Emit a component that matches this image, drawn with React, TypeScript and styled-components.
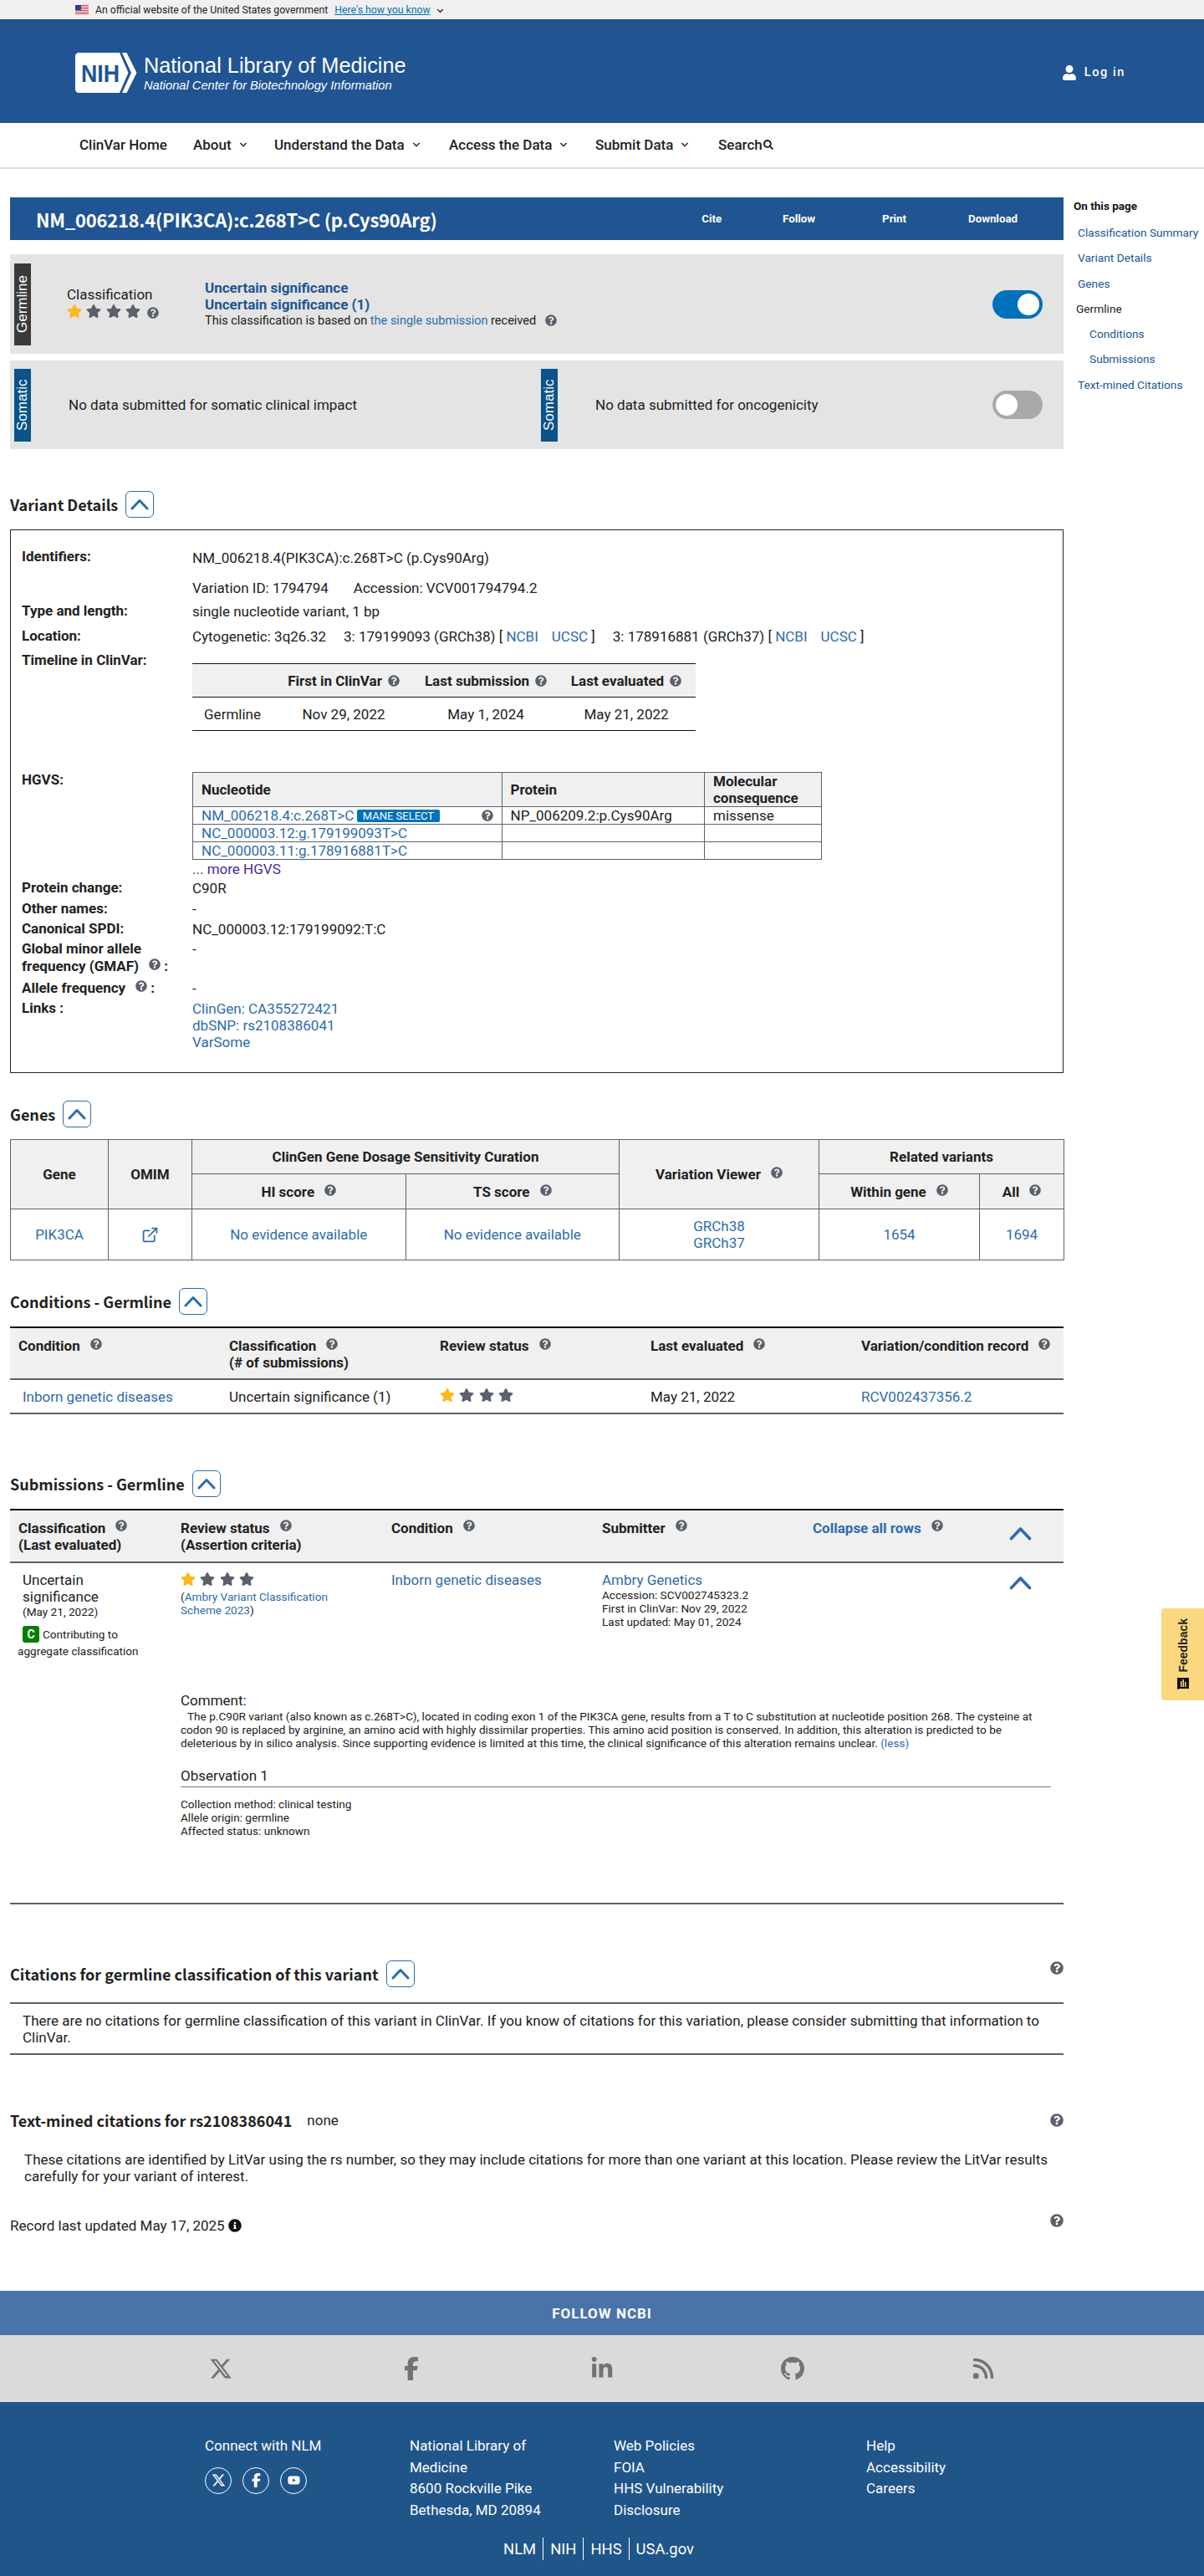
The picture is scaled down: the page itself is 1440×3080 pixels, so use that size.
import React from 'react';
import styled, { createGlobalStyle } from 'styled-components';
import { FaStar, FaQuestionCircle, FaSearch, FaUser, FaInfoCircle } from 'react-icons/fa';
import { FaXTwitter, FaFacebookF, FaLinkedinIn, FaRss, FaYoutube } from 'react-icons/fa6';
import { BsGithub } from 'react-icons/bs';
import { ExternalLink } from 'lucide-react';

const BLUE = '#205493';
const LINK = '#2e6cab';
const GREY = '#5b616b';
const SOURCE = '"Noto Sans CJK SC", "Source Sans Pro", "Open Sans", sans-serif';

const Global = createGlobalStyle`
  html, body { margin: 0; padding: 0; background: #fff; }
  body { font-family: Roboto, "Liberation Sans", sans-serif; font-size: 17px; line-height: 20px; color: #212121; }
  * { box-sizing: border-box; }
  a { color: ${LINK}; text-decoration: none; }
`;

const Root = styled.div`position: relative; width: 1440px; height: 3080px; overflow: hidden;`;

/* top */
const Banner = styled.div`height: 23px; background: #f0f0f0; display: flex; align-items: center; padding-left: 90px; font-size: 12.25px; color: #212121;`;
const BannerLink = styled.a`color: #0071bc; text-decoration: underline; margin-left: 8px;`;
const Header = styled.header`height: 124px; background: ${BLUE}; display: flex; align-items: center; justify-content: space-between; padding: 3px 94px 0 90px;`;
const LogoWrap = styled.div`display: flex; align-items: center; gap: 8px;`;
const LogoText = styled.div`color: #fff; font-family: "Liberation Sans", Arial, sans-serif;`;
const LogoTitle = styled.div`font-size: 25.3px; line-height: 30px;`;
const LogoSub = styled.div`font-size: 14.66px; line-height: 18px; font-style: italic;`;
const Login = styled.div`display: flex; align-items: center; gap: 9px; color: #fff; font-size: 14.5px; font-weight: 500; letter-spacing: 1.6px;`;
const Nav = styled.nav`height: 55px; border-bottom: 2px solid #dcdcdc; display: flex; align-items: center; padding: 0 0 2px 95px; font-size: 17px; font-weight: 500; color: #212121;`;
const NavItem = styled.div<{ $w: number; $gap?: number }>`width: ${p => p.$w}px; display: flex; align-items: center; gap: ${p => p.$gap ?? 9}px; white-space: nowrap;`;

/* layout */
const Main = styled.div`display: flex; padding: 34px 0 0 12px;`;
const Content = styled.main`width: 1260px; flex: none;`;
const Aside = styled.aside`margin-left: 12px; font-size: 13.7px;`;
const AsideTitle = styled.div`font-size: 13.5px; font-weight: 700; color: #111; line-height: 20px; margin-bottom: 12px;`;
const AsideItem = styled.a<{ $indent?: number; $plain?: boolean }>`display: block; height: 30.3px; line-height: 20px; padding-left: ${p => p.$indent ?? 5}px; color: ${p => (p.$plain ? '#212121' : BLUE)}; white-space: nowrap;`;

const TitleBar = styled.div`height: 51px; background: ${BLUE}; color: #fff; display: flex; align-items: center; padding: 0 55px 0 31px;`;
const Title = styled.h1`margin: 0; font: 700 22px/34px ${SOURCE}; letter-spacing: -0.25px; white-space: nowrap;`;
const Actions = styled.div`margin-left: auto; display: flex; font-size: 13.3px; font-weight: 700;`;
const Action = styled.span<{ $ml: number }>`margin-left: ${p => p.$ml}px;`;

const GermPanel = styled.section`margin-top: 17px; height: 119px; background: #e4e4e4; display: flex; align-items: center; padding-left: 5px;`;
const SomaticPanel = styled.section`margin-top: 8px; height: 106px; background: #e4e4e4; display: grid; grid-template-columns: 630px 1fr; padding-left: 5px; align-items: center;`;
const SideLabel = styled.div<{ $bg: string; $h: number }>`width: 20px; height: ${p => p.$h}px; background: ${p => p.$bg}; color: #fff; writing-mode: vertical-rl; transform: rotate(180deg); font: 17px/20px "Liberation Sans", Arial, sans-serif; text-align: center; flex: none;`;
const ClassBlock = styled.div`margin-left: 43px; width: 165px; flex: none;`;
const ClassLabel = styled.div`line-height: 20px; margin-bottom: 1px;`;
const Stars = styled.span`display: inline-flex; align-items: center; gap: 5.4px;`;
const HelpGap = styled.span<{ $l?: number; $t?: number }>`display: inline-block; margin-left: ${p => p.$l ?? 8}px; position: relative; top: ${p => p.$t ?? 1}px; line-height: 0; vertical-align: baseline;`;
const ClassResult = styled.div`font-size: 14.5px; line-height: 20px;`;
const ResultStrong = styled.div`color: ${BLUE}; font-size: 17px; font-weight: 700; line-height: 20px;`;
const SomaticHalf = styled.div`display: flex; align-items: center; position: relative;`;
const SomaticText = styled.div`margin-left: 45px;`;
const Toggle = styled.div<{ $on?: boolean }>`width: 60px; height: 34px; border-radius: 34px; background: ${p => (p.$on ? '#0071bc' : '#a9a9a9')}; position: relative; flex: none; margin-left: auto; margin-right: 25px; &::after { content: ''; position: absolute; width: 26px; height: 26px; border-radius: 50%; background: #fff; top: 4px; left: ${p => (p.$on ? '30px' : '4px')}; }`;

/* section heading */
const HeadingRow = styled.div<{ $top: number; $bottom?: number }>`margin-top: ${p => p.$top}px; margin-bottom: ${p => p.$bottom ?? 14}px; height: 32px; display: flex; align-items: center;`;
const Heading = styled.h2`margin: 0; font: 700 18px/28px ${SOURCE}; color: #212121; white-space: nowrap;`;
const Collapse = styled.button`margin-left: 9px; width: 34px; height: 32px; padding: 0; border: 1px solid ${LINK}; border-radius: 6px; background: #fff; display: flex; align-items: center; justify-content: center;`;
const RightHelp = styled.span<{ $t?: number }>`margin-left: auto; align-self: flex-start; margin-top: ${p => p.$t ?? 0}px; line-height: 0;`;
const CenterHelp = styled.span`margin-left: auto; line-height: 0;`;

/* variant details */
const DetailBox = styled.div`margin-top: 14px; height: 650px; border: 1px solid #222; padding: 22px 0 0 13px;`;
const Row = styled.div<{ $h: number }>`display: grid; grid-template-columns: 204px 1fr; height: ${p => p.$h}px;`;
const Label = styled.div<{ $lh?: number }>`font-weight: 700; line-height: ${p => p.$lh ?? 20}px; margin-top: -1px;`;
const Value = styled.div<{ $top?: number }>`line-height: 20px; white-space: nowrap; padding-top: ${p => p.$top ?? 0}px;`;
const Spaced = styled.span<{ $ml: number }>`margin-left: ${p => p.$ml}px;`;
const TimeTable = styled.table`margin-top: 13px; width: 602px; border-collapse: collapse; table-layout: fixed; border-top: 1px solid #111; border-bottom: 1px solid #111; text-align: center;`;
const TimeHeadCell = styled.th`height: 40px; padding: 0; background: #f0f0f0; font-weight: 700; border-bottom: 1px solid #111; white-space: nowrap;`;
const TimeCell = styled.td`height: 40px; padding: 0;`;
const HgvsTable = styled.table`width: 752px; border-collapse: collapse; table-layout: fixed; border: 1px solid ${GREY};`;
const HgvsHead = styled.th`height: 41px; padding: 0 10px; background: #f0f0f0; text-align: left; font-weight: 700; line-height: 20px; border: 1px solid ${GREY}; white-space: normal;`;
const HgvsCell = styled.td`height: 21px; padding: 0 10px; line-height: 20px; border: 1px solid ${GREY}; white-space: nowrap;`;
const CellFlex = styled.div`display: flex; align-items: center;`;
const Mane = styled.span`margin-left: 4px; background: #0071bc; color: #fff; font-size: 13px; line-height: 15px; height: 15px; padding: 0 6.5px; border-radius: 2px; white-space: nowrap;`;
const MoreLink = styled.a`color: #4b2a9a; display: block; line-height: 22px;`;
const StackLink = styled.a`display: block;`;

/* tables */
const GeneTable = styled.table`width: 1260px; border-collapse: collapse; table-layout: fixed; text-align: center; border: 1px solid ${GREY};`;
const GeneHead = styled.th<{ $h?: number }>`padding: 0; height: ${p => p.$h ?? 41}px; background: #f0f0f0; font-weight: 700; border: 1px solid ${GREY};`;
const GeneCell = styled.td`height: 61px; padding: 0; border: 1px solid ${GREY}; line-height: 20px;`;
const IconLink = styled.a`display: inline-flex; vertical-align: middle;`;
const CondGrid = styled.div`display: grid; grid-template-columns: repeat(5, 252px);`;
const CondHead = styled(CondGrid)`height: 64px; background: #f0f0f0; border-top: 2px solid #111; border-bottom: 2px solid ${GREY}; font-weight: 700; padding-top: 11px;`;
const CondBody = styled(CondGrid)`height: 41px; border-bottom: 2px solid ${GREY}; align-items: center;`;
const CondCell = styled.div<{ $pad: number }>`padding-left: ${p => p.$pad}px;`;
const SubHead = styled.div`height: 65px; background: #f0f0f0; border-top: 2px solid #111; border-bottom: 2px solid ${GREY}; display: grid; grid-template-columns: 204px 252px 252px 252px 1fr; font-weight: 700; padding-top: 11px;`;
const SubCell = styled.div<{ $pad?: number }>`padding-left: ${p => p.$pad ?? 0}px; position: relative;`;
const SubBody = styled.div`height: 143px; display: grid; grid-template-columns: 204px 252px 252px 252px 1fr; padding-top: 10px;`;
const Small = styled.div<{ $lh?: number }>`font-size: 13.6px; line-height: ${p => p.$lh ?? 16}px;`;
const SigCell = styled.div`padding-left: 15px; line-height: 20px;`;
const Badge = styled.span`display: inline-block; width: 20px; height: 20px; background: #008000; color: #fff; border-radius: 3px; font-size: 14px; line-height: 20px; font-weight: 700; text-align: center; margin-right: 4px;`;
const Contrib = styled.div`font-size: 13.6px; line-height: 20px; margin: 8px 0 0 -6px; width: 170px;`;
const ContribTop = styled.div`display: flex; align-items: center; margin-left: 6px;`;
const ChevronSpot = styled.span<{ $t: number }>`position: absolute; left: 235px; top: ${p => p.$t}px; line-height: 0;`;
const CommentBlock = styled.div`margin-left: 204px; margin-top: 11px; width: 1041px;`;
const CommentTitle = styled.div`line-height: 20px;`;
const CommentText = styled.div`font-size: 13.6px; line-height: 16px; margin-top: 1px; text-indent: 8px; width: 1030px;`;
const ObsTitle = styled.div`margin-top: 21px; line-height: 20px; border-bottom: 1px solid #777; height: 24px;`;
const ObsList = styled.div`font-size: 13.6px; line-height: 16px; margin-top: 12px;`;
const Rule = styled.div<{ $top: number }>`margin-top: ${p => p.$top}px; height: 2px; background: ${GREY};`;
const Para = styled.div<{ $h: number; $pad: number; $top: number; $rule?: boolean }>`height: ${p => p.$h}px; padding: ${p => p.$top}px 0 0 ${p => p.$pad}px; line-height: 20px; ${p => p.$rule && `border-bottom: 2px solid ${GREY};`}`;
const NoneNote = styled.span`margin-left: 18px;`;
const RecordRow = styled.div`margin-top: 39px; display: flex; align-items: center; height: 20px; position: relative;`;
const RecordIcon = styled.span`margin-left: 4px; line-height: 0; color: #111;`;

/* feedback */
const Feedback = styled.div`position: absolute; left: 1389px; top: 1923px; width: 51px; height: 110px; background: #fbd77f; border-radius: 4px 0 0 4px; display: flex; flex-direction: column-reverse; align-items: center; justify-content: center; gap: 6px; font: 700 14px/16px "Liberation Sans", Arial, sans-serif; color: #222;`;
const FeedbackText = styled.span`writing-mode: vertical-rl; transform: rotate(180deg);`;

/* footer */
const Footer = styled.footer`margin-top: 68px;`;
const FollowBar = styled.div`height: 53px; background: #4a73aa; color: #fff; display: flex; align-items: center; justify-content: center; font: 700 17px/20px Roboto, sans-serif; letter-spacing: 1px;`;
const SocialBar = styled.div`height: 80px; background: #dadada; display: flex; align-items: center; justify-content: center; gap: 200px; color: #737373;`;
const FootMain = styled.div`height: 208px; background: #20558a; color: #fff; padding-top: 40px; line-height: 25.6px;`;
const FootGrid = styled.div`display: grid; grid-template-columns: 245px 244px 302px 1fr; padding-left: 245px;`;
const Circles = styled.div`display: flex; gap: 13px; margin-top: 12px;`;
const Circle = styled.span`width: 32px; height: 32px; border: 1px solid #fff; border-radius: 50%; display: flex; align-items: center; justify-content: center; background: #20558a;`;
const FootLinks = styled.div`display: flex; justify-content: center; margin-top: 20px; margin-left: -8px; font-size: 18.4px;`;
const FootLink = styled.span`height: 27px; line-height: 27px; padding: 0 8px; & + & { border-left: 1px solid #fff; }`;

const Help = ({ s = 14 }: { s?: number }) => <FaQuestionCircle size={s} color={GREY} />;
const H = ({ l, t, s }: { l?: number; t?: number; s?: number }) => <HelpGap $l={l} $t={t}><Help s={s} /></HelpGap>;
const Chev = ({ w = 12, h = 7, sw = 1.6, c = '#212121' }: { w?: number; h?: number; sw?: number; c?: string }) => (
  <svg width={w} height={h} viewBox="0 0 12 7" fill="none" stroke={c} strokeWidth={sw} strokeLinecap="round" strokeLinejoin="round"><path d="M2 1.5 6 5.5 10 1.5" /></svg>
);
const Up = ({ w = 22, h = 14, sw = 3 }: { w?: number; h?: number; sw?: number }) => (
  <svg width={w} height={h} viewBox="0 0 22 14" fill="none" stroke={LINK} strokeWidth={sw} strokeLinecap="round" strokeLinejoin="round"><path d="M2 12 11 2.5 20 12" /></svg>
);
const StarRow = ({ s = 18 }: { s?: number }) => (
  <Stars>
    <FaStar size={s} color="#fdb81e" /><FaStar size={s} color={GREY} /><FaStar size={s} color={GREY} /><FaStar size={s} color={GREY} />
  </Stars>
);
const Flag = () => (
  <svg width="16" height="11" viewBox="0 0 16 11">
    <rect width="16" height="11" fill="#fff" />
    {[0, 2, 4, 6, 8, 10].map(y => <rect key={y} y={y} width="16" height="1" fill="#c8313e" />)}
    <rect width="7" height="6" fill="#2a3f8f" />
  </svg>
);
const NihLogo = () => (
  <svg width="74" height="48" viewBox="0 0 74 48">
    <path d="M4 0H53L63.5 24 53 48H4C1.8 48 0 46.2 0 44V4C0 1.8 1.8 0 4 0Z" fill="#fff" />
    <path d="M56 0H61.5L73.5 24 61.5 48H56L67 24Z" fill="#fff" />
    <text x="7" y="35" fontFamily="Liberation Sans, Arial, sans-serif" fontWeight="700" fontSize="30" fill="#205493" textLength="46" lengthAdjust="spacingAndGlyphs">NIH</text>
  </svg>
);
const Search = () => <FaSearch size={12} color="#212121" />;

export default function App() {
  return (
    <Root>
      <Global />
      <Banner>
        <Flag />
        <Spaced $ml={8}>An official website of the United States government</Spaced>
        <BannerLink href="#">Here's how you know</BannerLink>
        <Spaced $ml={7}><Chev w={9} h={6} /></Spaced>
      </Banner>
      <Header>
        <LogoWrap>
          <NihLogo />
          <LogoText>
            <LogoTitle>National Library of Medicine</LogoTitle>
            <LogoSub>National Center for Biotechnology Information</LogoSub>
          </LogoText>
        </LogoWrap>
        <Login><FaUser size={18} color="#fff" /><span>Log in</span></Login>
      </Header>
      <Nav>
        <NavItem $w={136}>ClinVar Home</NavItem>
        <NavItem $w={97}>About <Chev w={10} h={6} /></NavItem>
        <NavItem $w={209}>Understand the Data <Chev w={10} h={6} /></NavItem>
        <NavItem $w={175}>Access the Data <Chev w={10} h={6} /></NavItem>
        <NavItem $w={147}>Submit Data <Chev w={10} h={6} /></NavItem>
        <NavItem $w={80} $gap={1}>Search<Search /></NavItem>
      </Nav>
      <Main>
        <Content>
          <TitleBar>
            <Title>NM_006218.4(PIK3CA):c.268T&gt;C (p.Cys90Arg)</Title>
            <Actions>
              <Action $ml={0}>Cite</Action>
              <Action $ml={73}>Follow</Action>
              <Action $ml={80}>Print</Action>
              <Action $ml={74}>Download</Action>
            </Actions>
          </TitleBar>

          <GermPanel>
            <SideLabel $bg="#3a3a3a" $h={98}>Germline</SideLabel>
            <ClassBlock>
              <ClassLabel>Classification</ClassLabel>
              <StarRow /><H l={8} t={0} />
            </ClassBlock>
            <ClassResult>
              <ResultStrong>Uncertain significance</ResultStrong>
              <ResultStrong>Uncertain significance (1)</ResultStrong>
              This classification is based on <a href="#">the single submission</a> received<H l={11} t={2} />
            </ClassResult>
            <Toggle $on />
          </GermPanel>
          <SomaticPanel>
            <SomaticHalf>
              <SideLabel $bg="#0b5388" $h={87}>Somatic</SideLabel>
              <SomaticText>No data submitted for somatic clinical impact</SomaticText>
            </SomaticHalf>
            <SomaticHalf>
              <SideLabel $bg="#0b5388" $h={87}>Somatic</SideLabel>
              <SomaticText>No data submitted for oncogenicity</SomaticText>
              <Toggle />
            </SomaticHalf>
          </SomaticPanel>

          <HeadingRow $top={50} $bottom={0}><Heading>Variant Details</Heading><Collapse><Up /></Collapse></HeadingRow>
          <DetailBox>
            <Row $h={37}><Label>Identifiers:</Label><Value $top={1}>NM_006218.4(PIK3CA):c.268T&gt;C (p.Cys90Arg)</Value></Row>
            <Row $h={28}><Label /><Value>Variation ID: 1794794<Spaced $ml={30}>Accession: VCV001794794.2</Spaced></Value></Row>
            <Row $h={30}><Label>Type and length:</Label><Value>single nucleotide variant, 1 bp</Value></Row>
            <Row $h={29}>
              <Label>Location:</Label>
              <Value>
                Cytogenetic: 3q26.32
                <Spaced $ml={21}>3: 179199093 (GRCh38) [ <a href="#">NCBI</a><Spaced $ml={16}><a href="#">UCSC</a></Spaced> ]</Spaced>
                <Spaced $ml={21}>3: 178916881 (GRCh37) [ <a href="#">NCBI</a><Spaced $ml={16}><a href="#">UCSC</a></Spaced> ]</Spaced>
              </Value>
            </Row>
            <Row $h={143}>
              <Label>Timeline in ClinVar:</Label>
              <Value>
                <TimeTable>
                  <colgroup><col width="96" /><col width="170" /><col width="170" /><col width="166" /></colgroup>
                  <thead>
                    <tr>
                      <TimeHeadCell />
                      <TimeHeadCell>First in ClinVar<H l={7} /></TimeHeadCell>
                      <TimeHeadCell>Last submission<H l={7} /></TimeHeadCell>
                      <TimeHeadCell>Last evaluated<H l={7} /></TimeHeadCell>
                    </tr>
                  </thead>
                  <tbody>
                    <tr><TimeCell>Germline</TimeCell><TimeCell>Nov 29, 2022</TimeCell><TimeCell>May 1, 2024</TimeCell><TimeCell>May 21, 2022</TimeCell></tr>
                  </tbody>
                </TimeTable>
              </Value>
            </Row>
            <Row $h={129}>
              <Label>HGVS:</Label>
              <Value>
                <HgvsTable>
                  <colgroup><col width="369.5" /><col width="242.5" /><col width="140" /></colgroup>
                  <thead>
                    <tr><HgvsHead>Nucleotide</HgvsHead><HgvsHead>Protein</HgvsHead><HgvsHead>Molecular consequence</HgvsHead></tr>
                  </thead>
                  <tbody>
                    <tr>
                      <HgvsCell><CellFlex><a href="#">NM_006218.4:c.268T&gt;C</a><Mane>MANE SELECT</Mane><CenterHelp><Help /></CenterHelp></CellFlex></HgvsCell>
                      <HgvsCell>NP_006209.2:p.Cys90Arg</HgvsCell>
                      <HgvsCell>missense</HgvsCell>
                    </tr>
                    <tr><HgvsCell><a href="#">NC_000003.12:g.179199093T&gt;C</a></HgvsCell><HgvsCell /><HgvsCell /></tr>
                    <tr><HgvsCell><a href="#">NC_000003.11:g.178916881T&gt;C</a></HgvsCell><HgvsCell /><HgvsCell /></tr>
                  </tbody>
                </HgvsTable>
                <MoreLink href="#">... more HGVS</MoreLink>
              </Value>
            </Row>
            <Row $h={25}><Label>Protein change:</Label><Value>C90R</Value></Row>
            <Row $h={24}><Label>Other names:</Label><Value>-</Value></Row>
            <Row $h={24}><Label>Canonical SPDI:</Label><Value>NC_000003.12:179199092:T:C</Value></Row>
            <Row $h={47}><Label $lh={21}>Global minor allele<br />frequency (GMAF)<H l={12} t={-1} /> :</Label><Value>-</Value></Row>
            <Row $h={24}><Label>Allele frequency<H l={12} t={-1} /> :</Label><Value>-</Value></Row>
            <Row $h={60}>
              <Label>Links :</Label>
              <Value>
                <StackLink href="#">ClinGen: CA355272421</StackLink>
                <StackLink href="#">dbSNP: rs2108386041</StackLink>
                <StackLink href="#">VarSome</StackLink>
              </Value>
            </Row>
          </DetailBox>

          <HeadingRow $top={33}><Heading>Genes</Heading><Collapse><Up /></Collapse></HeadingRow>
          <GeneTable>
            <colgroup><col width="117" /><col width="100" /><col width="255.5" /><col width="255.5" /><col width="239" /><col width="192" /><col width="101" /></colgroup>
            <thead>
              <tr>
                <GeneHead rowSpan={2}>Gene</GeneHead>
                <GeneHead rowSpan={2}>OMIM</GeneHead>
                <GeneHead colSpan={2}>ClinGen Gene Dosage Sensitivity Curation</GeneHead>
                <GeneHead rowSpan={2}>Variation Viewer<H l={12} t={-1} /></GeneHead>
                <GeneHead colSpan={2}>Related variants</GeneHead>
              </tr>
              <tr>
                <GeneHead $h={42}>HI score<H l={12} t={-1} /></GeneHead>
                <GeneHead $h={42}>TS score<H l={12} t={-1} /></GeneHead>
                <GeneHead $h={42}>Within gene<H l={12} t={-1} /></GeneHead>
                <GeneHead $h={42}>All<H l={12} t={-1} /></GeneHead>
              </tr>
            </thead>
            <tbody>
              <tr>
                <GeneCell><a href="#">PIK3CA</a></GeneCell>
                <GeneCell><IconLink href="#"><ExternalLink size={21} strokeWidth={2} color={LINK} /></IconLink></GeneCell>
                <GeneCell><a href="#">No evidence available</a></GeneCell>
                <GeneCell><a href="#">No evidence available</a></GeneCell>
                <GeneCell><StackLink href="#">GRCh38</StackLink><StackLink href="#">GRCh37</StackLink></GeneCell>
                <GeneCell><a href="#">1654</a></GeneCell>
                <GeneCell><a href="#">1694</a></GeneCell>
              </tr>
            </tbody>
          </GeneTable>

          <HeadingRow $top={33}><Heading>Conditions - Germline</Heading><Collapse><Up /></Collapse></HeadingRow>
          <CondHead>
            <CondCell $pad={10}>Condition<H l={12} t={-1} /></CondCell>
            <CondCell $pad={10}>Classification<H l={12} t={-1} /><br />(# of submissions)</CondCell>
            <CondCell $pad={10}>Review status<H l={12} t={-1} /></CondCell>
            <CondCell $pad={10}>Last evaluated<H l={12} t={-1} /></CondCell>
            <CondCell $pad={10}>Variation/condition record<H l={12} t={-1} /></CondCell>
          </CondHead>
          <CondBody>
            <CondCell $pad={15}><a href="#">Inborn genetic diseases</a></CondCell>
            <CondCell $pad={10}>Uncertain significance (1)</CondCell>
            <CondCell $pad={10}><StarRow /></CondCell>
            <CondCell $pad={10}>May 21, 2022</CondCell>
            <CondCell $pad={10}><a href="#">RCV002437356.2</a></CondCell>
          </CondBody>

          <HeadingRow $top={67}><Heading>Submissions - Germline</Heading><Collapse><Up /></Collapse></HeadingRow>
          <SubHead>
            <SubCell $pad={10}>Classification<H l={12} t={-2} /><br />(Last evaluated)</SubCell>
            <SubCell>Review status<H l={12} t={-2} /><br />(Assertion criteria)</SubCell>
            <SubCell>Condition<H l={12} t={-2} /></SubCell>
            <SubCell>Submitter<H l={12} t={-2} /></SubCell>
            <SubCell><a href="#">Collapse all rows</a><H l={12} t={-2} /><ChevronSpot $t={8}><Up w={27} h={17} /></ChevronSpot></SubCell>
          </SubHead>
          <SubBody>
            <SigCell>
              Uncertain<br />significance
              <Small $lh={17}>(May 21, 2022)</Small>
              <Contrib>
                <ContribTop><Badge>C</Badge>Contributing to</ContribTop>
                aggregate classification
              </Contrib>
            </SigCell>
            <SubCell>
              <StarRow />
              <Small>(<a href="#">Ambry Variant Classification<br />Scheme 2023</a>)</Small>
            </SubCell>
            <SubCell><a href="#">Inborn genetic diseases</a></SubCell>
            <SubCell>
              <a href="#">Ambry Genetics</a>
              <Small>Accession: SCV002745323.2</Small>
              <Small>First in ClinVar: Nov 29, 2022</Small>
              <Small>Last updated: May 01, 2024</Small>
            </SubCell>
            <SubCell><ChevronSpot $t={5}><Up w={27} h={17} /></ChevronSpot></SubCell>
          </SubBody>
          <CommentBlock>
            <CommentTitle>Comment:</CommentTitle>
            <CommentText>The p.C90R variant (also known as c.268T&gt;C), located in coding exon 1 of the PIK3CA gene, results from a T to C substitution at nucleotide position 268. The cysteine at codon 90 is replaced by arginine, an amino acid with highly dissimilar properties. This amino acid position is conserved. In addition, this alteration is predicted to be deleterious by in silico analysis. Since supporting evidence is limited at this time, the clinical significance of this alteration remains unclear. <a href="#">(less)</a></CommentText>
            <ObsTitle>Observation 1</ObsTitle>
            <ObsList>
              Collection method: clinical testing<br />
              Allele origin: germline<br />
              Affected status: unknown
            </ObsList>
          </CommentBlock>
          <Rule $top={78} />

          <HeadingRow $top={67} $bottom={0}>
            <Heading>Citations for germline classification of this variant</Heading><Collapse><Up /></Collapse>
            <RightHelp $t={1}><Help s={16} /></RightHelp>
          </HeadingRow>
          <Rule $top={18} />
          <Para $h={61} $pad={15} $top={10} $rule>There are no citations for germline classification of this variant in ClinVar. If you know of citations for this variation, please consider submitting that information to ClinVar.</Para>
          <HeadingRow $top={62} $bottom={0}>
            <Heading>Text-mined citations for rs2108386041</Heading><NoneNote>none</NoneNote>
            <CenterHelp><Help s={16} /></CenterHelp>
          </HeadingRow>
          <Para $h={61} $pad={17} $top={21}>These citations are identified by LitVar using the rs number, so they may include citations for more than one variant at this location. Please review the LitVar results carefully for your variant of interest.</Para>
          <RecordRow>
            Record last updated May 17, 2025<RecordIcon><FaInfoCircle size={16} /></RecordIcon>
            <RightHelp $t={-4}><Help s={16} /></RightHelp>
          </RecordRow>
        </Content>
        <Aside>
          <AsideTitle>On this page</AsideTitle>
          <AsideItem href="#">Classification Summary</AsideItem>
          <AsideItem href="#">Variant Details</AsideItem>
          <AsideItem href="#">Genes</AsideItem>
          <AsideItem href="#" $plain $indent={3}>Germline</AsideItem>
          <AsideItem href="#" $indent={19}>Conditions</AsideItem>
          <AsideItem href="#" $indent={19}>Submissions</AsideItem>
          <AsideItem href="#">Text-mined Citations</AsideItem>
        </Aside>
      </Main>
      <Footer>
        <FollowBar>FOLLOW NCBI</FollowBar>
        <SocialBar>
          <FaXTwitter size={28} /><FaFacebookF size={28} /><FaLinkedinIn size={28} /><BsGithub size={28} /><FaRss size={28} />
        </SocialBar>
        <FootMain>
          <FootGrid>
            <div>
              Connect with NLM
              <Circles>
                <Circle><FaXTwitter size={17} /></Circle>
                <Circle><FaFacebookF size={17} /></Circle>
                <Circle><FaYoutube size={15} /></Circle>
              </Circles>
            </div>
            <div>National Library of<br />Medicine<br />8600 Rockville Pike<br />Bethesda, MD 20894</div>
            <div>Web Policies<br />FOIA<br />HHS Vulnerability<br />Disclosure</div>
            <div>Help<br />Accessibility<br />Careers</div>
          </FootGrid>
          <FootLinks>
            <FootLink>NLM</FootLink><FootLink>NIH</FootLink><FootLink>HHS</FootLink><FootLink>USA.gov</FootLink>
          </FootLinks>
        </FootMain>
      </Footer>
      <Feedback>
        <svg width="16" height="16" viewBox="0 0 16 16"><path d="M1 1h14v13H4l-3 1z" fill="#111" /><path d="M5 5h1.5v7H5zM7.5 3h1.5v9H7.5zM10 6h1.5v6H10z" fill="#fbd77f" /></svg>
        <FeedbackText>Feedback</FeedbackText>
      </Feedback>
    </Root>
  );
}
